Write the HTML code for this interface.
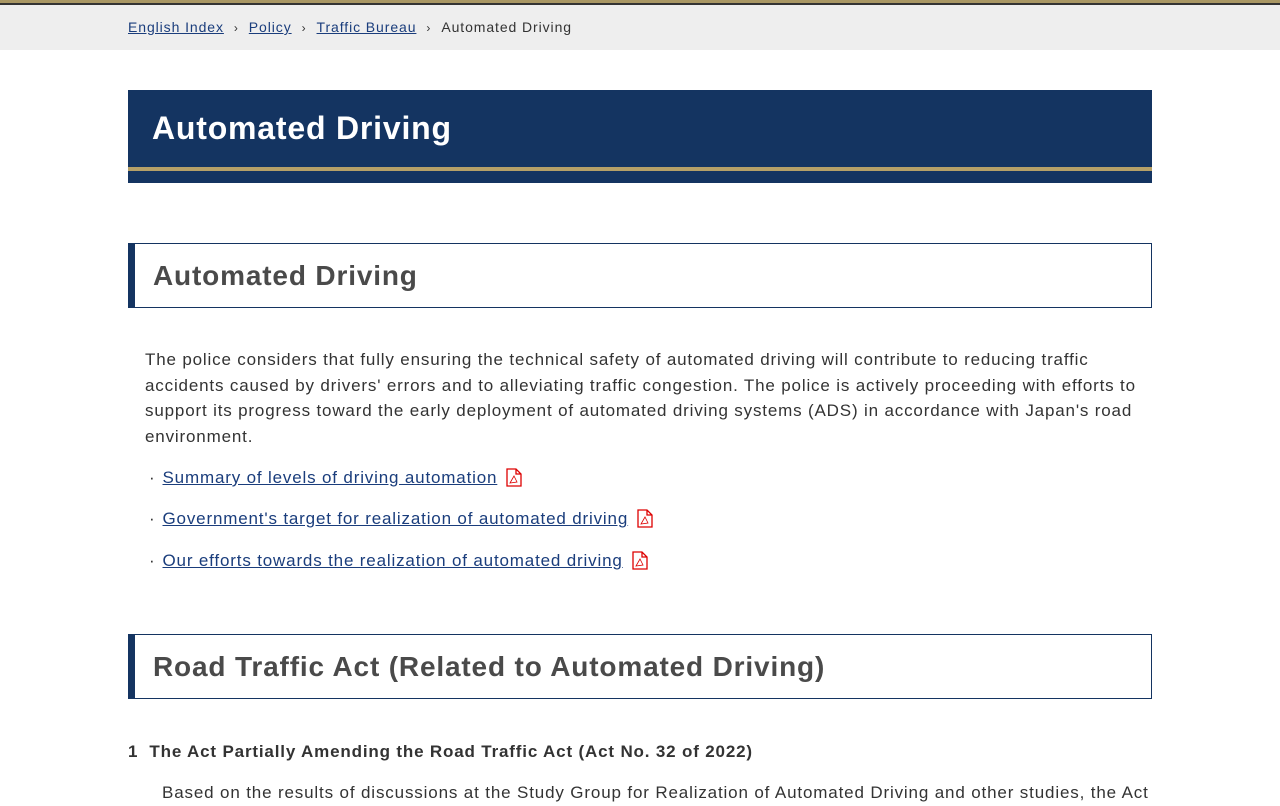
<!DOCTYPE html>
<html><head><meta charset="utf-8"><style>
*{margin:0;padding:0;box-sizing:border-box}
body{width:1280px;height:800px;overflow:hidden;background:#fff;font-family:"Liberation Sans",sans-serif;color:#333;letter-spacing:.052em}
.top{height:3px;background:#a99764}.top2{height:2px;background:#333}
.bc{background:#eee;height:45px;padding-left:128px;font-size:14px;line-height:44px;color:#333;letter-spacing:.065em}
.bc a{color:#1a3d7c;text-decoration:underline}
.bc .s{margin:0 10px;font-size:12px}
.h1{position:absolute;left:128px;top:90px;width:1024px;height:93px;background:#143461}
.h1 span{position:absolute;left:24px;top:20px;color:#fff;font-size:32px;font-weight:bold;letter-spacing:.025em}
.h1 i{position:absolute;left:0;right:0;top:77px;height:4px;background:#b5a068}
.h2{position:absolute;left:128px;width:1024px;height:65px;border:1px solid #143461;border-left:7px solid #143461;font-size:28px;font-weight:bold;color:#4a4a4a;padding-left:18px;line-height:63px;letter-spacing:.03em}
p{position:absolute;left:145px;width:1010px;font-size:17px;line-height:25.5px}
.li{position:absolute;left:149px;font-size:17px}
.li a{color:#1a3d7c;text-decoration:underline;margin-left:7px}
.li svg{vertical-align:-4px;margin-left:9px}
</style></head><body>
<div class="top"></div><div class="top2"></div>
<div class="bc"><a>English Index</a><span class="s">›</span><a>Policy</a><span class="s">›</span><a>Traffic Bureau</a><span class="s">›</span>Automated Driving</div>
<div class="h1"><span>Automated Driving</span><i></i></div>
<div class="h2" style="top:243px">Automated Driving</div>
<p style="top:347px">The police considers that fully ensuring the technical safety of automated driving will contribute to reducing traffic accidents caused by drivers' errors and to alleviating traffic congestion. The police is actively proceeding with efforts to support its progress toward the early deployment of automated driving systems (ADS) in accordance with Japan's road environment.</p>
<div class="li" style="top:468px">·<a>Summary of levels of driving automation</a><svg width="16" height="19" viewBox="0 0 16 19"><path d="M1 1H10L15 6V18H1Z M10 1V6H15" fill="#fff" stroke="#d00" stroke-width="1.3"/><path d="M4 15L8 8L11 14Z" fill="none" stroke="#d00" stroke-width=".8"/></svg></div>
<div class="li" style="top:509px">·<a>Government's target for realization of automated driving</a><svg width="16" height="19" viewBox="0 0 16 19"><path d="M1 1H10L15 6V18H1Z M10 1V6H15" fill="#fff" stroke="#d00" stroke-width="1.3"/><path d="M4 15L8 8L11 14Z" fill="none" stroke="#d00" stroke-width=".8"/></svg></div>
<div class="li" style="top:551px">·<a>Our efforts towards the realization of automated driving</a><svg width="16" height="19" viewBox="0 0 16 19"><path d="M1 1H10L15 6V18H1Z M10 1V6H15" fill="#fff" stroke="#d00" stroke-width="1.3"/><path d="M4 15L8 8L11 14Z" fill="none" stroke="#d00" stroke-width=".8"/></svg></div>
<div class="h2" style="top:634px">Road Traffic Act (Related to Automated Driving)</div>
<div style="position:absolute;left:128px;top:742px;font-size:17px;font-weight:bold;color:#333">1&nbsp; The Act Partially Amending the Road Traffic Act (Act No. 32 of 2022)</div>
<p style="top:780px;left:162px;width:990px;white-space:nowrap;letter-spacing:.05em">Based on the results of discussions at the Study Group for Realization of Automated Driving and other studies, the Act</p>
</body></html>
